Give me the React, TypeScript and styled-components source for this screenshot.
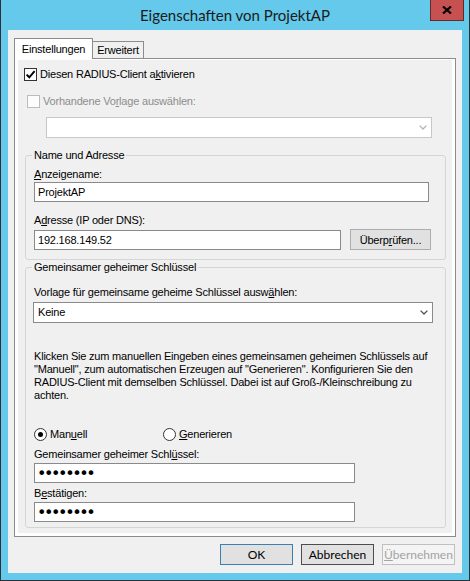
import React from "react";
import styled, { createGlobalStyle, css } from "styled-components";

const GlobalStyle = createGlobalStyle`
  html, body { margin: 0; padding: 0; background: #64c9ea; }
  body {
    font-family: "Liberation Sans", Arial, sans-serif;
    font-size: 11px;
    letter-spacing: -0.2px;
    color: #000;
  }
  * { box-sizing: border-box; }
`;

const Frame = styled.div`
  width: 470px;
  height: 581px;
  background: #64c9ea;
  border: 1px solid #2d3134;
  border-top: none;
  display: flex;
  flex-direction: column;
`;

const TitleBar = styled.div`
  height: 30px;
  flex: none;
  display: grid;
  grid-template-columns: 1fr auto 1fr;
  align-items: start;
`;

const Title = styled.div`
  grid-column: 2;
  align-self: center;
  font-family: "Lato", "Liberation Sans", sans-serif;
  font-size: 15px;
  letter-spacing: 0;
  color: #1b1b1b;
  line-height: 30px;
  white-space: nowrap;
`;

const CloseButton = styled.div`
  grid-column: 3;
  justify-self: end;
  width: 34px;
  height: 21px;
  margin-right: 5px;
  background: #c75050;
  border: 1px solid #5b2d2d;
  border-top: none;
  display: flex;
  align-items: center;
  justify-content: center;
`;

const Client = styled.div`
  flex: 1;
  margin: 0 7px 7px;
  background: #f0f0f0;
  padding: 8px 6px 8px;
  display: flex;
  flex-direction: column;
`;

const TabStrip = styled.div`
  height: 20px;
  display: flex;
  align-items: flex-end;
  position: relative;
  z-index: 1;
`;

const Tab = styled.div<{ $active?: boolean }>`
  display: flex;
  align-items: center;
  justify-content: center;
  border: 1px solid #8c8c8c;
  border-bottom: none;
  white-space: nowrap;
  ${(p) =>
    p.$active
      ? css`
          width: 79px;
          height: 21px;
          margin-bottom: -1px;
          background: #fff;
          padding-bottom: 1px;
        `
      : css`
          width: 51px;
          height: 17px;
          border-left: none;
          background: #f0f0f0;
        `}
`;

const TabPanel = styled.div`
  height: 479px;
  flex: none;
  border: 1px solid #8c8c8c;
  background: #fff;
  padding: 1px 3px 3px;
  display: flex;
`;

const PanelBody = styled.div`
  flex: 1;
  background: #f0f0f0;
  display: flex;
  flex-direction: column;
  align-items: flex-start;
`;

const CheckRow = styled.label<{ $top: number; $left: number; $disabled?: boolean }>`
  display: flex;
  align-items: center;
  gap: 3px;
  height: 13px;
  line-height: 13px;
  margin-top: ${(p) => p.$top}px;
  margin-left: ${(p) => p.$left}px;
  color: ${(p) => (p.$disabled ? "#8d8d8d" : "#000")};
`;

const Box = styled.span<{ $disabled?: boolean }>`
  width: 13px;
  height: 13px;
  flex: none;
  border: 1px solid ${(p) => (p.$disabled ? "#bcbcbc" : "#333")};
  background: ${(p) => (p.$disabled ? "#fcfcfc" : "#fff")};
  display: flex;
  align-items: center;
  justify-content: center;
`;

const Key = styled.span`
  text-decoration: underline;
  text-underline-offset: 1px;
`;

const Combo = styled.div<{ $top: number; $left: number; $width: number; $disabled?: boolean }>`
  margin-top: ${(p) => p.$top}px;
  margin-left: ${(p) => p.$left}px;
  width: ${(p) => p.$width}px;
  height: 21px;
  flex: none;
  background: #fff;
  border: 1px solid ${(p) => (p.$disabled ? "#c8c8c8" : "#8a8a8a")};
  display: flex;
  align-items: center;
  padding-left: 4px;
  line-height: 13px;
`;

const ComboText = styled.span`
  flex: 1;
`;

const ChevronBox = styled.span`
  width: 17px;
  height: 100%;
  display: flex;
  align-items: center;
  justify-content: center;
`;

const Group = styled.fieldset<{ $top: number; $bottom: number }>`
  margin: ${(p) => p.$top}px 0 0 7px;
  width: 421px;
  min-inline-size: 0;
  padding: 0 8px ${(p) => p.$bottom}px;
  border: 1px solid #d5d5d5;
  border-radius: 3px;
  display: flex;
  flex-direction: column;
  align-items: flex-start;
`;

const Legend = styled.legend`
  padding: 0 2px;
  margin-left: -2px;
  line-height: 13px;
`;

const FieldLabel = styled.div<{ $top: number }>`
  margin-top: ${(p) => p.$top}px;
  line-height: 13px;
  white-space: nowrap;
`;

const TextBox = styled.input<{ $top: number; $width: number }>`
  margin: ${(p) => p.$top}px 0 0;
  width: ${(p) => p.$width}px;
  height: 20px;
  flex: none;
  background: #fff;
  border: 1px solid #8a8a8a;
  padding: 0 3px;
  font-family: "Liberation Sans", Arial, sans-serif;
  font-size: 11px;
  letter-spacing: -0.2px;
  color: #000;
  outline: none;
`;

const SecretBox = styled(TextBox)`
  font-family: "DejaVu Sans", sans-serif;
  font-size: 16px;
  letter-spacing: -2.4px;
  padding: 0 0 0 2px;
`;

const AddressRow = styled.div`
  margin-top: 2px;
  display: flex;
  align-items: flex-end;
  gap: 9px;
`;

const PushButton = styled.button`
  width: 81px;
  height: 21px;
  background: #e1e1e1;
  border: 1px solid #adadad;
  font-family: "Liberation Sans", Arial, sans-serif;
  font-size: 11px;
  letter-spacing: -0.2px;
  color: #000;
  padding: 0;
`;

const Hint = styled.p`
  margin: 27px 0 0;
  line-height: 13px;
  white-space: nowrap;
`;

const RadioRow = styled.div`
  margin-top: 26px;
  height: 13px;
  display: flex;
  align-items: center;
`;

const RadioOption = styled.label<{ $width?: number }>`
  display: flex;
  align-items: center;
  gap: 3px;
  line-height: 13px;
  width: ${(p) => (p.$width ? `${p.$width}px` : "auto")};
`;

const RadioCircle = styled.span<{ $checked?: boolean }>`
  width: 13px;
  height: 13px;
  flex: none;
  border: 1px solid #333;
  border-radius: 50%;
  background: #fff;
  display: flex;
  align-items: center;
  justify-content: center;
  &::after {
    content: "";
    width: 5px;
    height: 5px;
    border-radius: 50%;
    background: ${(p) => (p.$checked ? "#000" : "transparent")};
  }
`;

const Actions = styled.div`
  margin-top: 7px;
  padding-right: 1px;
  display: flex;
  justify-content: flex-end;
  gap: 8px;
`;

const DialogButton = styled.button<{ $variant?: "default" | "focus" | "disabled" }>`
  width: 73px;
  height: 21px;
  padding: 0;
  font-family: "Lato", "Liberation Sans", sans-serif;
  font-size: 12px;
  background: #e1e1e1;
  color: #000;
  border: 1px solid #adadad;
  ${(p) =>
    p.$variant === "default" &&
    css`
      border-color: #3c7fb1;
    `}
  ${(p) =>
    p.$variant === "focus" &&
    css`
      border-color: #4d4d4d;
    `}
  ${(p) =>
    p.$variant === "disabled" &&
    css`
      background: #f4f4f4;
      border-color: #bfbfbf;
      color: #a3a3a3;
    `}
`;

const CheckMark = () => (
  <svg width="11" height="11" viewBox="0 0 11 11">
    <path d="M1.6 5.6 L4.3 8.3 L9.6 2.2" fill="none" stroke="#000" strokeWidth="2" />
  </svg>
);

const Chevron = ({ color }: { color: string }) => (
  <svg width="8" height="5" viewBox="0 0 8 5">
    <polyline points="0.6,0.6 4,4 7.4,0.6" fill="none" stroke={color} strokeWidth="1.3" />
  </svg>
);

const CloseGlyph = () => (
  <svg width="10" height="8" viewBox="0 0 10 8">
    <path d="M1 0.5 L9 7.5 M9 0.5 L1 7.5" stroke="#000" strokeWidth="2.2" />
  </svg>
);

export default function App() {
  return (
    <>
      <GlobalStyle />
      <Frame>
        <TitleBar>
          <Title>Eigenschaften von ProjektAP</Title>
          <CloseButton>
            <CloseGlyph />
          </CloseButton>
        </TitleBar>
        <Client>
          <TabStrip>
            <Tab $active>Einstellungen</Tab>
            <Tab>Erweitert</Tab>
          </TabStrip>
          <TabPanel>
            <PanelBody>
              <CheckRow $top={8} $left={6}>
                <Box>
                  <CheckMark />
                </Box>
                <span>
                  Diesen RADIUS-Client a<Key>k</Key>tivieren
                </span>
              </CheckRow>
              <CheckRow $top={14} $left={9} $disabled>
                <Box $disabled />
                <span>
                  Vorhandene Vo<Key>r</Key>lage auswählen:
                </span>
              </CheckRow>
              <Combo $top={9} $left={28} $width={386} $disabled>
                <ComboText />
                <ChevronBox>
                  <Chevron color="#b4b4b4" />
                </ChevronBox>
              </Combo>

              <Group $top={11} $bottom={9}>
                <Legend>Name und Adresse</Legend>
                <FieldLabel $top={6}>
                  <Key>A</Key>nzeigename:
                </FieldLabel>
                <TextBox $top={1} $width={395} readOnly value="ProjektAP" />
                <FieldLabel $top={12}>
                  A<Key>d</Key>resse (IP oder DNS):
                </FieldLabel>
                <AddressRow>
                  <TextBox $top={0} $width={307} readOnly value="192.168.149.52" />
                  <PushButton>
                    Überp<Key>r</Key>üfen...
                  </PushButton>
                </AddressRow>
              </Group>

              <Group $top={1} $bottom={5}>
                <Legend>Gemeinsamer geheimer Schlüssel</Legend>
                <FieldLabel $top={12}>
                  Vorlage für gemeinsame geheime Schlüssel ausw<Key>ä</Key>hlen:
                </FieldLabel>
                <Combo $top={3} $left={-1} $width={400}>
                  <ComboText>Keine</ComboText>
                  <ChevronBox>
                    <Chevron color="#505050" />
                  </ChevronBox>
                </Combo>
                <Hint>
                  Klicken Sie zum manuellen Eingeben eines gemeinsamen geheimen Schlüssels auf
                  <br />
                  "Manuell", zum automatischen Erzeugen auf "Generieren". Konfigurieren Sie den
                  <br />
                  RADIUS-Client mit demselben Schlüssel. Dabei ist auf Groß-/Kleinschreibung zu
                  <br />
                  achten.
                </Hint>
                <RadioRow>
                  <RadioOption $width={129}>
                    <RadioCircle $checked />
                    <span>
                      Man<Key>u</Key>ell
                    </span>
                  </RadioOption>
                  <RadioOption>
                    <RadioCircle />
                    <span>
                      <Key>G</Key>enerieren
                    </span>
                  </RadioOption>
                </RadioRow>
                <FieldLabel $top={7}>
                  Gemeinsamer geheimer Schl<Key>ü</Key>ssel:
                </FieldLabel>
                <SecretBox type="password" $top={2} $width={321} readOnly value="k8Rf2xQa" />
                <FieldLabel $top={4}>
                  B<Key>e</Key>stätigen:
                </FieldLabel>
                <SecretBox type="password" $top={2} $width={321} readOnly value="k8Rf2xQa" />
              </Group>
            </PanelBody>
          </TabPanel>
          <Actions>
            <DialogButton $variant="default">OK</DialogButton>
            <DialogButton $variant="focus">Abbrechen</DialogButton>
            <DialogButton $variant="disabled">
              <Key>Ü</Key>bernehmen
            </DialogButton>
          </Actions>
        </Client>
      </Frame>
    </>
  );
}
